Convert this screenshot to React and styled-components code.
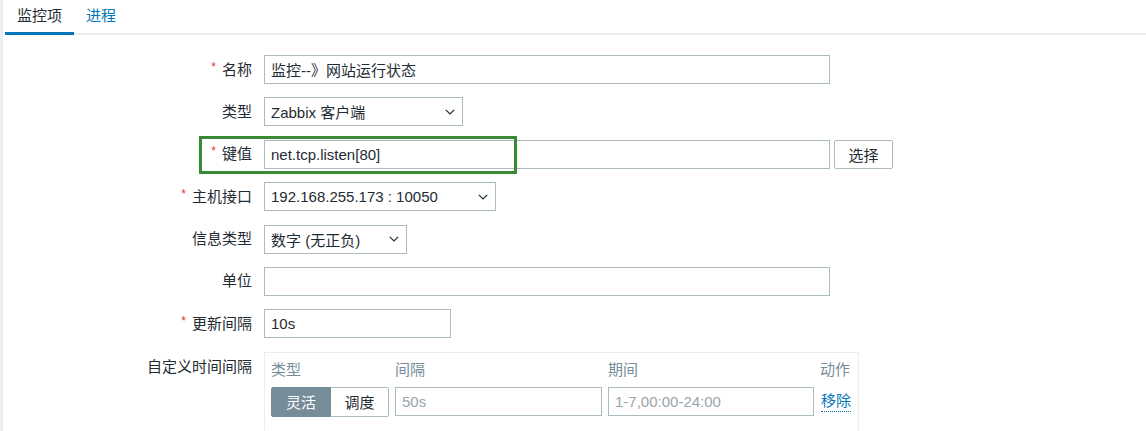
import styled, { createGlobalStyle } from 'styled-components';

const GlobalStyle = createGlobalStyle`
  html, body {
    margin: 0;
    padding: 0;
    background: #fff;
  }
  body {
    font-family: "Liberation Sans", Arial, "Noto Sans CJK SC", sans-serif;
    font-size: 15px;
    color: #1f2c33;
  }
`;

const Page = styled.div`
  height: 431px;
  border-left: 3px solid #ebeef0;
  overflow: hidden;
`;

const TabBar = styled.div`
  display: flex;
  margin-left: 2px;
  border-bottom: 2px solid #ebeef0;
`;

const Tab = styled.div`
  padding: 0 12px;
  line-height: 32px;
  height: 32px;
  margin-bottom: -2px;
  border-bottom: 3px solid ${p => (p.$active ? '#0275b8' : 'transparent')};
  color: ${p => (p.$active ? '#1f2c33' : '#0275b8')};
`;

const Form = styled.div`
  position: relative;
  display: grid;
  grid-template-columns: 249px 1fr;
  grid-auto-rows: 29px;
  column-gap: 12px;
  row-gap: 13.4px;
  padding-top: 20px;
  align-items: center;
`;

const Label = styled.div`
  display: flex;
  justify-content: flex-end;
  align-items: ${p => (p.$top ? 'flex-start' : 'center')};
  box-sizing: border-box;
  height: 29px;
  padding-top: ${p => (p.$top ? 5 : 0)}px;
  align-self: start;
  line-height: 20px;
  white-space: nowrap;
`;

const Req = styled.span`
  color: #e33734;
  font-size: 12px;
  margin-right: 6px;
  position: relative;
  top: -3px;
`;

const Field = styled.div`
  display: flex;
  align-items: center;
  gap: 4px;
  height: 29px;
`;

const TextInput = styled.div`
  box-sizing: border-box;
  flex: 0 0 auto;
  width: ${p => p.$w}px;
  height: 29px;
  border: 1px solid #acbbc2;
  padding: 0 6px;
  display: flex;
  align-items: center;
  color: ${p => (p.$muted ? '#9aa5ab' : '#1f2c33')};
  white-space: nowrap;
  background: #fff;
`;

const Select = styled(TextInput)`
  justify-content: space-between;
  padding-right: 7px;
`;

const Button = styled.div`
  box-sizing: border-box;
  width: 59px;
  height: 29px;
  border: 1px solid #acbbc2;
  border-radius: 2px;
  display: flex;
  align-items: center;
  justify-content: center;
  color: #1f2c33;
`;

const Highlight = styled.div`
  position: absolute;
  left: 196px;
  top: 101px;
  width: 318px;
  height: 38px;
  box-sizing: border-box;
  border: 3px solid #388a35;
  pointer-events: none;
`;

const Panel = styled.div`
  align-self: start;
  box-sizing: border-box;
  width: 595px;
  height: 90px;
  border: 1px solid #ebeef0;
  border-bottom: none;
  padding: 5px 6px 0 6px;
  display: grid;
  grid-template-columns: 118px 207px 206px auto;
  grid-template-rows: 24px 30px;
  align-content: start;
  column-gap: 6px;
  row-gap: 5px;
  align-items: center;
`;

const ColHead = styled.div`
  color: #768d99;
  line-height: 24px;
`;

const Segmented = styled.div`
  display: flex;
  height: 30px;
`;

const Seg = styled.div`
  box-sizing: border-box;
  flex: ${p => (p.$w ? `0 0 ${p.$w}px` : 1)};
  display: flex;
  align-items: center;
  justify-content: center;
  border: 1px solid ${p => (p.$active ? '#768d99' : '#acbbc2')};
  background: ${p => (p.$active ? '#768d99' : '#fff')};
  color: ${p => (p.$active ? '#fff' : '#1f2c33')};
  border-radius: ${p => (p.$first ? '2px 0 0 2px' : '0 2px 2px 0')};
  ${p => !p.$first && 'border-left: none;'}
`;

const LinkText = styled.span`
  color: #0275b8;
  border-bottom: 1px dotted #0275b8;
  line-height: 20px;
  justify-self: start;
  margin-left: 1px;
`;

const Chevron = () => (
  <svg width="10" height="6" viewBox="0 0 10 6">
    <path d="M0.8 0.8 L5 5 L9.2 0.8" fill="none" stroke="#1f2c33" strokeWidth="1.2" />
  </svg>
);

export default function App() {
  return (
    <>
      <GlobalStyle />
      <Page>
        <TabBar>
          <Tab $active>监控项</Tab>
          <Tab>进程</Tab>
        </TabBar>
        <Form>
          <Label><Req>*</Req>名称</Label>
          <Field>
            <TextInput $w={566}>监控--》网站运行状态</TextInput>
          </Field>

          <Label>类型</Label>
          <Field>
            <Select $w={199}>
              Zabbix 客户端
              <Chevron />
            </Select>
          </Field>

          <Label><Req>*</Req>键值</Label>
          <Field>
            <TextInput $w={566}>net.tcp.listen[80]</TextInput>
            <Button>选择</Button>
          </Field>

          <Label><Req>*</Req>主机接口</Label>
          <Field>
            <Select $w={232}>
              192.168.255.173 : 10050
              <Chevron />
            </Select>
          </Field>

          <Label>信息类型</Label>
          <Field>
            <Select $w={143}>
              数字 (无正负)
              <Chevron />
            </Select>
          </Field>

          <Label>单位</Label>
          <Field>
            <TextInput $w={566} />
          </Field>

          <Label><Req>*</Req>更新间隔</Label>
          <Field>
            <TextInput $w={187}>10s</TextInput>
          </Field>

          <Label $top>自定义时间间隔</Label>
          <Panel>
            <ColHead>类型</ColHead>
            <ColHead>间隔</ColHead>
            <ColHead>期间</ColHead>
            <ColHead>动作</ColHead>
            <Segmented>
              <Seg $active $first $w={60}>灵活</Seg>
              <Seg>调度</Seg>
            </Segmented>
            <TextInput $w={207} $muted>50s</TextInput>
            <TextInput $w={206} $muted>1-7,00:00-24:00</TextInput>
            <LinkText>移除</LinkText>
          </Panel>

          <Highlight />
        </Form>
      </Page>
    </>
  );
}
